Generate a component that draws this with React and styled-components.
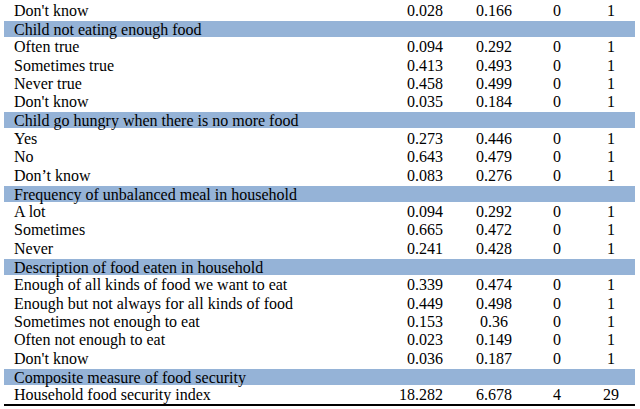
import React from "react";
import styled, { createGlobalStyle } from "styled-components";

const Global = createGlobalStyle`
  html, body { margin: 0; padding: 0; background: #fff; }
  body { font-family: "Liberation Serif", "Times New Roman", serif; color: #000; }
`;

const Page = styled.div`
  width: 640px;
  height: 409px;
  padding: 1.4px 5px 0 4px;
  box-sizing: border-box;
  overflow: hidden;
  font-family: "Liberation Serif", "Times New Roman", serif;
`;

const Table = styled.div`
  display: flex;
  flex-direction: column;
  border-bottom: 2px solid #000;
`;

const Row = styled.div`
  display: grid;
  grid-template-columns: 384px 70px 72px 54px 51px;
  height: 18.32px;
  box-sizing: border-box;
  font-size: 16px;
  line-height: 17px;
  padding: ${(p) => (p.$head ? "1px 0 1.3px" : "0.3px 0 1px")};
  background: ${(p) => (p.$head ? "#95b3d7" : "transparent")};
  background-clip: content-box;
`;

const Label = styled.div`
  padding-left: 10px;
  white-space: nowrap;
`;

const Num = styled.div`
  white-space: nowrap;
  text-align: ${(p) => p.$align || "center"};
  padding-right: ${(p) => p.$pr || 0}px;
  padding-left: ${(p) => p.$pl || 0}px;
`;

const sections = [
  { rows: [["Don't know", "0.028", "0.166", "0", "1"]] },
  {
    title: "Child not eating enough food",
    rows: [
      ["Often true", "0.094", "0.292", "0", "1"],
      ["Sometimes true", "0.413", "0.493", "0", "1"],
      ["Never true", "0.458", "0.499", "0", "1"],
      ["Don't know", "0.035", "0.184", "0", "1"],
    ],
  },
  {
    title: "Child go hungry when there is no more food",
    rows: [
      ["Yes", "0.273", "0.446", "0", "1"],
      ["No", "0.643", "0.479", "0", "1"],
      ["Don’t know", "0.083", "0.276", "0", "1"],
    ],
  },
  {
    title: "Frequency of unbalanced meal in household",
    rows: [
      ["A lot", "0.094", "0.292", "0", "1"],
      ["Sometimes", "0.665", "0.472", "0", "1"],
      ["Never", "0.241", "0.428", "0", "1"],
    ],
  },
  {
    title: "Description of food eaten in household",
    rows: [
      ["Enough of all kinds of food we want to eat", "0.339", "0.474", "0", "1"],
      ["Enough but not always for all kinds of food", "0.449", "0.498", "0", "1"],
      ["Sometimes not enough to eat", "0.153", "0.36", "0", "1"],
      ["Often not enough to eat", "0.023", "0.149", "0", "1"],
      ["Don't know", "0.036", "0.187", "0", "1"],
    ],
  },
  {
    title: "Composite measure of food security",
    rows: [["Household food security index", "18.282", "6.678", "4", "29"]],
  },
];

function DataRow({ cells }) {
  const [label, mean, sd, min, max] = cells;
  return (
    <Row>
      <Label>{label}</Label>
      <Num $align="right" $pr={15}>{mean}</Num>
      <Num>{sd}</Num>
      <Num>{min}</Num>
      <Num $pl={3}>{max}</Num>
    </Row>
  );
}

export default function App() {
  return (
    <Page>
      <Global />
      <Table>
        {sections.map((s, i) => (
          <React.Fragment key={i}>
            {s.title && (
              <Row $head>
                <Label>{s.title}</Label>
              </Row>
            )}
            {s.rows.map((r, j) => (
              <DataRow key={j} cells={r} />
            ))}
          </React.Fragment>
        ))}
      </Table>
    </Page>
  );
}
